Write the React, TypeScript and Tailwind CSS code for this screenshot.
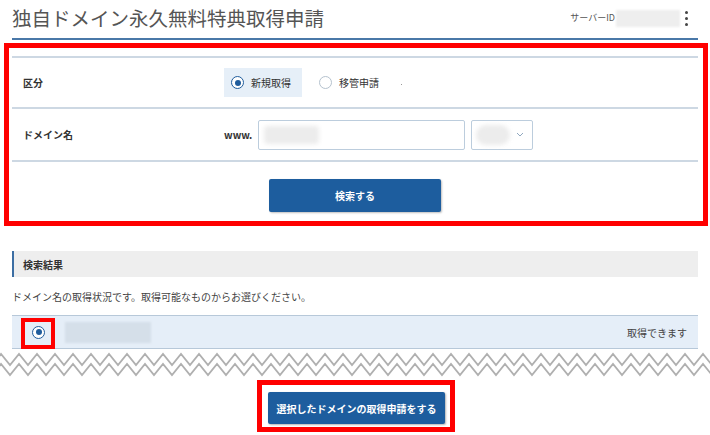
import React from "react";

const font = { fontFamily: '"Noto Sans CJK JP", "Noto Sans", sans-serif' };

function Radio({ checked }: { checked?: boolean }) {
  return (
    <span
      className={`flex h-[13px] w-[13px] items-center justify-center rounded-full border-[1.5px] bg-white ${
        checked ? "border-[#1f5c9c]" : "border-[#b5c2ce]"
      }`}
    >
      {checked && <span className="h-[6px] w-[6px] rounded-full bg-[#1f5c9c]" />}
    </span>
  );
}

function Zigzag() {
  const pts = (offset: number) => {
    const out: string[] = [];
    for (let x = -8, i = 0; x <= 720; x += 9, i++) {
      out.push(`${x},${(i % 2 === 0 ? 14 : 3) + offset}`);
    }
    return out.join(" ");
  };
  return (
    <svg width="710" height="28" viewBox="0 0 710 28" className="block">
      <polyline points={pts(0)} fill="none" stroke="#b0b0b0" strokeWidth="1.8" />
      <polyline points={pts(10)} fill="none" stroke="#b0b0b0" strokeWidth="1.8" />
    </svg>
  );
}

export default function App() {
  return (
    <div className="relative h-[435px] w-[710px] overflow-hidden bg-white text-[#333]" style={font}>
      {/* header */}
      <div className="mx-[12px] flex h-[40px] items-center justify-between border-b-2 border-[#4a78a8] pb-[2px]">
        <h1 className="text-[19.5px] font-normal text-[#555]">独自ドメイン永久無料特典取得申請</h1>
        <div className="flex items-center pr-[10px]">
          <span className="text-[9px] text-[#555]">サーバーID</span>
          <span className="ml-[1px] h-[17px] w-[64px] bg-[#eeeeee] blur-[1px]" />
          <span className="ml-[4px] flex w-[4px] flex-col items-center gap-[3px]">
            <span className="h-[3px] w-[3px] rounded-full bg-[#444]" />
            <span className="h-[3px] w-[3px] rounded-full bg-[#444]" />
            <span className="h-[3px] w-[3px] rounded-full bg-[#444]" />
          </span>
        </div>
      </div>

      {/* form table */}
      <div className="mx-[12px] mt-[16px] border-t-2 border-[#cdd8e3]">
        <div className="flex h-[51px] items-center border-b-2 border-[#cdd8e3]">
          <div className="w-[212px] pl-[11px] text-[10px] font-bold">区分</div>
          <div className="flex items-center">
            <div className="flex h-[29px] w-[78px] items-center gap-[7px] bg-[#e6eff8] pl-[7px]">
              <Radio checked />
              <span className="text-[10px]">新規取得</span>
            </div>
            <div className="ml-[17px] flex items-center gap-[7px]">
              <Radio />
              <span className="text-[10px]">移管申請</span>
            </div>
            <span className="ml-[22px] mt-[4px] h-[1px] w-[1px] bg-[#999]" />
          </div>
        </div>
        <div className="flex h-[53px] items-center border-b-2 border-[#cdd8e3]">
          <div className="w-[212px] pl-[11px] text-[10px] font-bold">ドメイン名</div>
          <span className="w-[34px] text-[10px] font-bold">www.</span>
          <div className="flex h-[30px] w-[207px] items-center rounded-[2px] border-[1.5px] border-[#bccddd] bg-white pl-[5px]">
            <span className="h-[18px] w-[55px] rounded bg-[#ececec] blur-[2px]" />
          </div>
          <div className="ml-[6px] flex h-[30px] w-[62px] items-center justify-between rounded-[2px] border-[1.5px] border-[#bccddd] bg-white pl-[4px] pr-[8px]">
            <span className="h-[20px] w-[34px] rounded-full bg-[#ececec] blur-[2px]" />
            <svg width="8" height="5" viewBox="0 0 8 5">
              <polyline points="1,1 4,4 7,1" fill="none" stroke="#90a8bf" strokeWidth="1" />
            </svg>
          </div>
        </div>
        <div className="flex justify-center pt-[17px]">
          <button
            type="button"
            className="h-[33px] w-[172px] rounded-[2px] bg-[#1d5d9e] text-[10px] font-bold text-white shadow-[1px_1px_2px_rgba(0,0,0,0.25)]"
          >
            検索する
          </button>
        </div>
      </div>

      {/* results */}
      <div className="mx-[12px] mt-[39px] flex h-[26px] items-center border-l-2 border-[#3c6ea3] bg-[#eeeeee] pl-[9px] text-[10px] font-bold">
        検索結果
      </div>
      <p className="mx-[12px] mt-[13px] text-[10px] leading-[14px] text-[#444]">
        ドメイン名の取得状況です。取得可能なものからお選びください。
      </p>
      <div className="mx-[12px] mt-[11px] flex h-[34px] items-center border-y border-[#b7c8d9] bg-[#e5eef8] pl-[20px] pr-[11px]">
        <Radio checked />
        <span className="ml-[20px] h-[21px] w-[86px] bg-[#d5dfe9] blur-[1px]" />
        <span className="ml-auto text-[10px] text-[#444]">取得できます</span>
      </div>

      <div className="mt-[2px]">
        <Zigzag />
      </div>

      <div className="flex justify-center pt-[13px]">
        <button
          type="button"
          className="ml-[3px] h-[32px] w-[177px] rounded-[2px] bg-[#1d5d9e] text-[10px] font-bold text-white shadow-[1px_1px_2px_rgba(0,0,0,0.3)]"
        >
          選択したドメインの取得申請をする
        </button>
      </div>

      {/* annotation frames */}
      <div className="pointer-events-none absolute left-[4px] top-[43px] h-[183px] w-[704px] border-[5px] border-[#ff0000]" />
      <div className="pointer-events-none absolute left-[21px] top-[318px] h-[31px] w-[34px] border-4 border-[#ff0000]" />
      <div className="pointer-events-none absolute left-[257px] top-[380px] h-[52px] w-[198px] border-[5px] border-[#ff0000]" />
    </div>
  );
}
